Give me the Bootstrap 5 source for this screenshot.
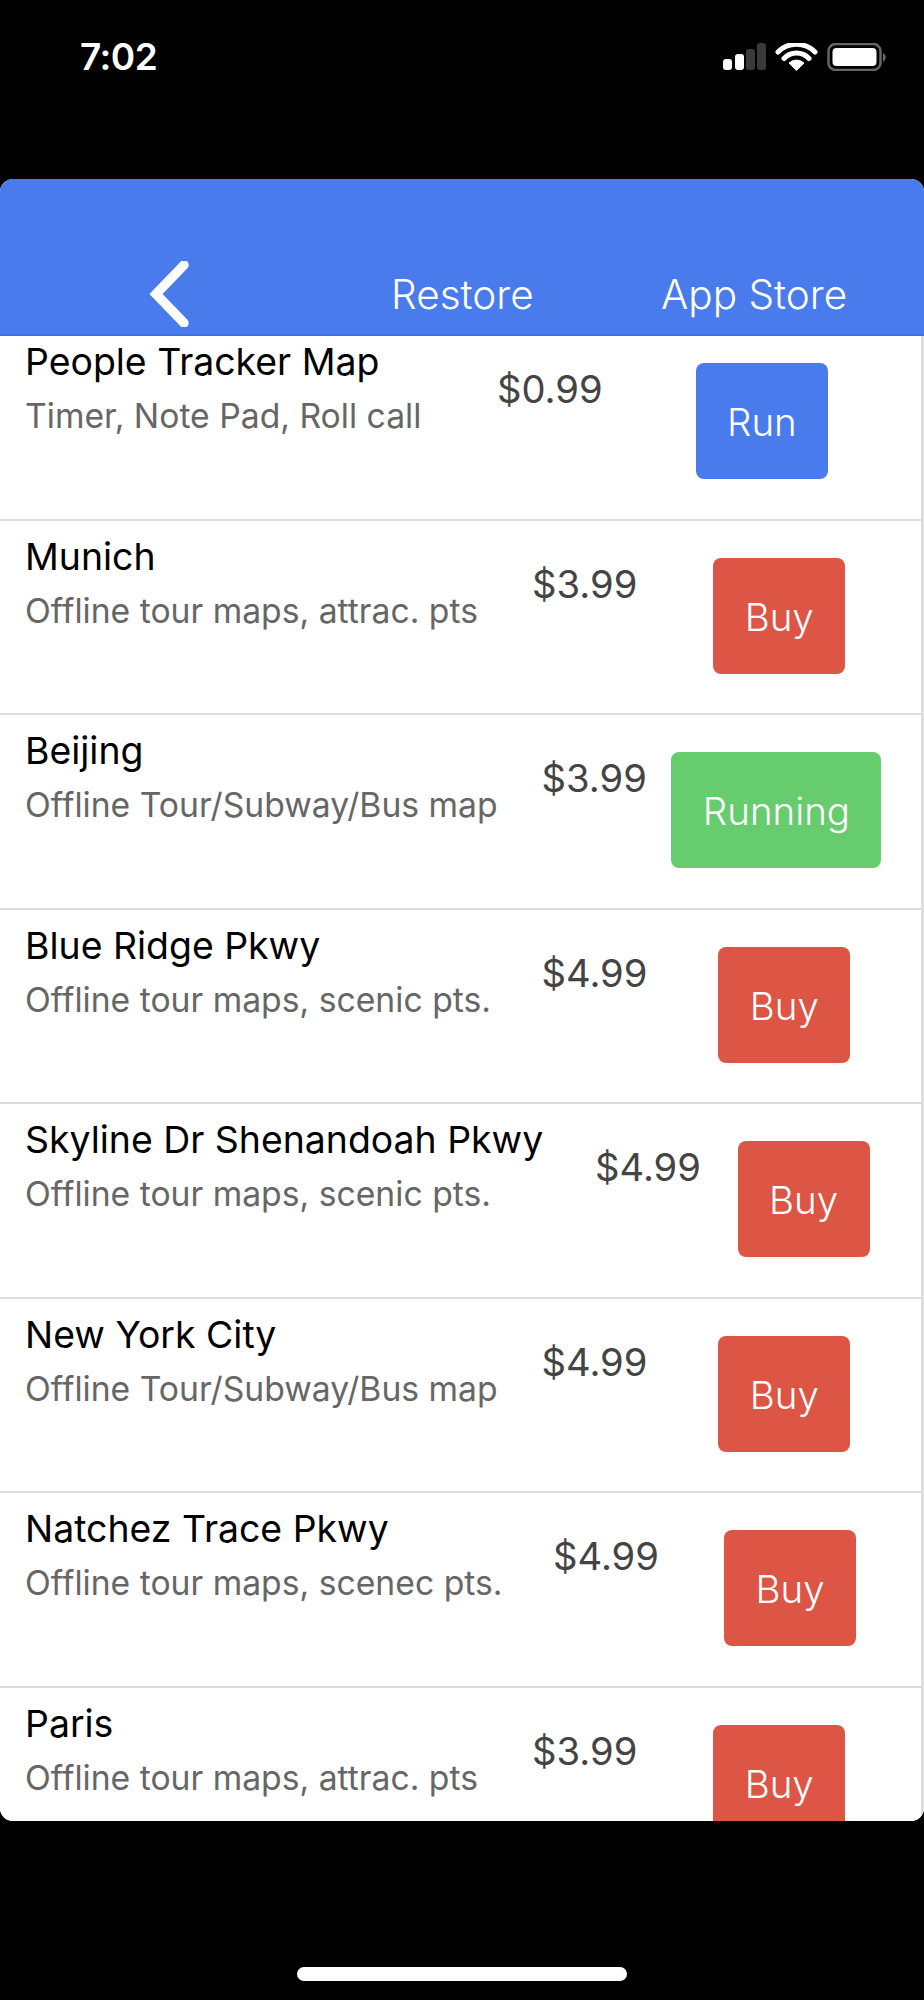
<!DOCTYPE html>
<html lang="en">
<head>
    <meta charset="UTF-8">
    <meta name="viewport" content="width=device-width, initial-scale=1.0">
    <title>Tour Maps Store</title>
    <link href="https://cdn.jsdelivr.net/npm/bootstrap@5.3.0/dist/css/bootstrap.min.css" rel="stylesheet">
    <style>
        html, body { height: 2000px; }
        body { background: #000; font-family: Inter, "Liberation Sans", sans-serif; overflow: hidden; }
        .status-bar { height: 179px; padding: 43px 36px 0 80px; align-items: flex-start; }
        .status-time { font-size: 37px; line-height: 28px; font-weight: 600; letter-spacing: -0.5px; }
        .app-shell { height: 1642px; border-radius: 13px; overflow: hidden; background: #fff; }
        .app-header { height: 157px; background: #4a7bec; border-bottom: 2px solid #3a6fe6; flex: none; color: #fff; font-size: 40.5px; font-weight: 300; }
        .back-icon { position: absolute; left: 148px; top: 82px; }
        .nav-restore { position: absolute; left: 391px; top: 93px; line-height: 46px; }
        .nav-store { position: absolute; left: 661px; top: 93px; line-height: 46px; }
        .app-list { border-right: 3px solid #ddd; flex: 1; min-height: 0; overflow: hidden; border-radius: 0; }
        .app-list > .app-row { flex: none; height: 194.5px; padding: 14px 0 0 25px; border-width: 0 0 2.6px; border-style: solid; border-color: #ddd; align-items: flex-start; }
        .app-row:first-child { margin-top: -10px; }
        .row-text { flex: none; white-space: nowrap; }
        .text-col-people { width: 422px; }
        .text-col-attrac { width: 457px; }
        .text-col-scenic { width: 466.500px; }
        .text-col-scenec { width: 478px; }
        .text-col-skyline { width: 520px; }
        .row-title { font-size: 37.4px; line-height: 44px; color: #000; }
        .row-sub { font-size: 33.7px; line-height: 46px; margin-top: 9px; color: #666; }
        .row-price { flex: none; margin: 27px 0 0 50px; font-size: 38.2px; line-height: 44px; color: #444; }
        .btn-slot { flex: 1; display: flex; margin-top: 23px; }
        .btn-slot-shift { padding-right: 15px; }
        .app-btn { height: 116px; width: 132px; margin: 0 auto; padding: 4px 0 0; border: 0; border-radius: 8px; color: #fff; font-size: 38.5px; font-weight: 300; }
        .btn-run { background: #4a7bec; }
        .btn-buy { background: #dd5544; }
        .btn-running { background: #66cc6e; width: 210px; }
        .home-bar { width: 330px; height: 14px; border-radius: 7px; background: #fff; margin: 146px auto 0; }
    </style>
</head>
<body>
    <div class="status-bar d-flex justify-content-between text-white">
        <span class="status-time">7:02</span>
        <svg width="166" height="28" viewBox="0 0 166 28">
            <rect x="1" y="16" width="9" height="11" rx="3" fill="#fff"/>
            <rect x="13" y="11" width="9" height="16" rx="3" fill="#fff"/>
            <rect x="24" y="6" width="9" height="21" rx="3" fill="#3a3a3a"/>
            <rect x="35" y="0" width="9" height="27" rx="3" fill="#3a3a3a"/>
            <path d="M56 9 a26 26 0 0 1 37 0 M62 15.500 a17 17 0 0 1 25 0" fill="none" stroke="#fff" stroke-width="5" stroke-linecap="round"/>
            <path d="M67 20 a11 11 0 0 1 15 0 l-7.500 7.500z" fill="#fff" stroke="#fff" stroke-linejoin="round"/>
            <rect x="106.500" y="1" width="52" height="26" rx="7" fill="none" stroke="#666" stroke-width="2.500"/>
            <rect x="110.500" y="5" width="44" height="18" rx="4" fill="#fff"/>
            <path d="M161 10 a5 5 0 0 1 0 9z" fill="#666"/>
        </svg>
    </div>
    <div class="app-shell d-flex flex-column">
        <div class="app-header position-relative">
            <svg class="back-icon" width="44" height="66" viewBox="0 0 44 66"><path d="M36 4 L8 33 L36 62" fill="none" stroke="#fff" stroke-width="9.500" stroke-linecap="round" stroke-linejoin="miter"/></svg>
            <span class="nav-restore">Restore</span>
            <span class="nav-store">App Store</span>
        </div>
        <div class="app-list list-group list-group-flush">
            <div class="list-group-item app-row d-flex">
                <div class="row-text text-col-people"><div class="row-title">People Tracker Map</div><div class="row-sub">Timer, Note Pad, Roll call</div></div>
                <div class="row-price">$0.99</div>
                <div class="btn-slot"><button class="btn app-btn btn-run">Run</button></div>
            </div>
            <div class="list-group-item app-row d-flex">
                <div class="row-text text-col-attrac"><div class="row-title">Munich</div><div class="row-sub">Offline tour maps, attrac. pts</div></div>
                <div class="row-price">$3.99</div>
                <div class="btn-slot"><button class="btn app-btn btn-buy">Buy</button></div>
            </div>
            <div class="list-group-item app-row d-flex">
                <div class="row-text text-col-scenic"><div class="row-title">Beijing</div><div class="row-sub">Offline Tour/Subway/Bus map</div></div>
                <div class="row-price">$3.99</div>
                <div class="btn-slot btn-slot-shift"><button class="btn app-btn btn-running">Running</button></div>
            </div>
            <div class="list-group-item app-row d-flex">
                <div class="row-text text-col-scenic"><div class="row-title">Blue Ridge Pkwy</div><div class="row-sub">Offline tour maps, scenic pts.</div></div>
                <div class="row-price">$4.99</div>
                <div class="btn-slot"><button class="btn app-btn btn-buy">Buy</button></div>
            </div>
            <div class="list-group-item app-row d-flex">
                <div class="row-text text-col-skyline"><div class="row-title">Skyline Dr Shenandoah Pkwy</div><div class="row-sub">Offline tour maps, scenic pts.</div></div>
                <div class="row-price">$4.99</div>
                <div class="btn-slot btn-slot-shift"><button class="btn app-btn btn-buy">Buy</button></div>
            </div>
            <div class="list-group-item app-row d-flex">
                <div class="row-text text-col-scenic"><div class="row-title">New York City</div><div class="row-sub">Offline Tour/Subway/Bus map</div></div>
                <div class="row-price">$4.99</div>
                <div class="btn-slot"><button class="btn app-btn btn-buy">Buy</button></div>
            </div>
            <div class="list-group-item app-row d-flex">
                <div class="row-text text-col-scenec"><div class="row-title">Natchez Trace Pkwy</div><div class="row-sub">Offline tour maps, scenec pts.</div></div>
                <div class="row-price">$4.99</div>
                <div class="btn-slot"><button class="btn app-btn btn-buy">Buy</button></div>
            </div>
            <div class="list-group-item app-row d-flex">
                <div class="row-text text-col-attrac"><div class="row-title">Paris</div><div class="row-sub">Offline tour maps, attrac. pts</div></div>
                <div class="row-price">$3.99</div>
                <div class="btn-slot"><button class="btn app-btn btn-buy">Buy</button></div>
            </div>
        </div>
    </div>
    <div class="home-bar"></div>
    <script src="https://cdn.jsdelivr.net/npm/bootstrap@5.3.0/dist/js/bootstrap.bundle.min.js"></script>
</body>
</html>
